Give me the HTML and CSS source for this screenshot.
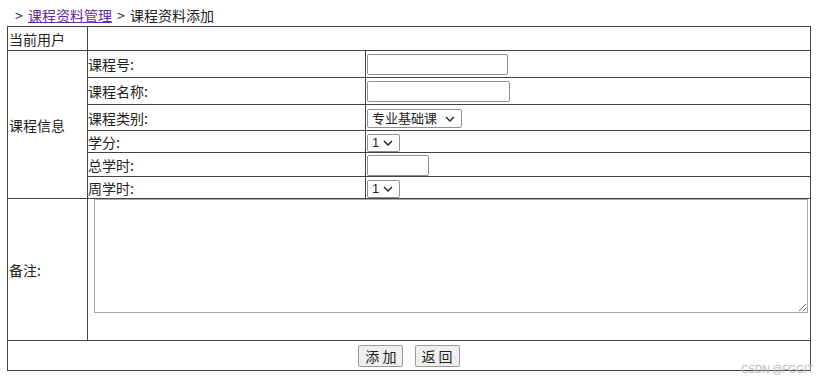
FILE: index.html
```html
<!DOCTYPE html>
<html lang="zh-CN">
<head>
    <meta charset="UTF-8">
    <title>课程资料添加</title>
    <link rel="stylesheet" href="styles.css">
</head>
<body>
    <div class="crumb">&gt; <a href="#">课程资料管理</a> &gt; 课程资料添加</div>

    <table class="form-table">
        <tr class="row-user">
            <td class="label-col">当前用户</td>
            <td colspan="2"></td>
        </tr>
        <tr class="row-text">
            <td class="label-col" rowspan="6">课程信息</td>
            <td class="name-col">课程号:</td>
            <td><input type="text" class="inp-id"></td>
        </tr>
        <tr class="row-text">
            <td class="name-col">课程名称:</td>
            <td><input type="text" class="inp-name"></td>
        </tr>
        <tr class="row-sel">
            <td class="name-col">课程类别:</td>
            <td>
                <select class="sel-type">
                    <option>专业基础课</option>
                    <option>专业必修课</option>
                    <option>公共课</option>
                </select>
            </td>
        </tr>
        <tr class="row-small">
            <td class="name-col">学分:</td>
            <td>
                <select class="sel-num">
                    <option>1</option><option>2</option><option>3</option><option>4</option>
                </select>
            </td>
        </tr>
        <tr class="row-hours">
            <td class="name-col">总学时:</td>
            <td><input type="text" class="inp-hours"></td>
        </tr>
        <tr class="row-small">
            <td class="name-col">周学时:</td>
            <td>
                <select class="sel-num">
                    <option>1</option><option>2</option><option>3</option><option>4</option>
                </select>
            </td>
        </tr>
        <tr class="row-note">
            <td class="label-col">备注:</td>
            <td colspan="2" class="note-cell"><textarea class="note"></textarea></td>
        </tr>
        <tr class="row-btn">
            <td colspan="3" class="btn-cell">
                <button class="btn">添 加</button>
                <button class="btn">返 回</button>
            </td>
        </tr>
    </table>

    <div class="mark">CSDN @FGGIT</div>
</body>
</html>
```

FILE: styles.css
```css
body {
    margin: 0;
    padding: 0 0 0 7px;
    font-family: "Noto Sans CJK SC", "Liberation Sans", sans-serif;
    font-size: 14px;
    color: #222;
    background: #fff;
    position: relative;
    height: 385px;
    overflow: hidden;
}

.crumb {
    height: 26px;
    line-height: 30px;
    padding-left: 8px;
    font-size: 14px;
    word-spacing: 2px;
}

.crumb a {
    color: #6a2aa8;
    text-decoration: underline;
    word-spacing: 0;
}

.form-table {
    width: 804px;
    border-collapse: collapse;
    border: 1px solid #444;
}

.form-table td {
    border: 1px solid #444;
    padding: 0;
    vertical-align: middle;
}

.label-col {
    width: 78px;
    padding-left: 1px !important;
}

.name-col {
    width: 277px;
}

.row-user { height: 24px; }
.row-text { height: 27px; }
.row-sel { height: 26px; }
.row-small { height: 22px; }
.row-hours { height: 23px; }
.row-note { height: 142px; }
.row-btn { height: 30px; }

input[type="text"] {
    box-sizing: border-box;
    height: 21px;
    margin: 0 0 0 1px;
    border: 1px solid #8f8f8f;
    border-radius: 2px;
    padding: 1px 2px;
    font: inherit;
    vertical-align: middle;
}

.inp-id { width: 141px; }
.inp-name { width: 143px; }
.inp-hours { width: 62px; }

select {
    -webkit-appearance: none;
    appearance: none;
    box-sizing: border-box;
    margin: 0 0 0 1px;
    height: 19px;
    border: 1px solid #8f8f8f;
    border-radius: 2px;
    background-color: #fff;
    background-image: url("data:image/svg+xml,%3Csvg xmlns='http://www.w3.org/2000/svg' width='10' height='6' viewBox='0 0 10 6'%3E%3Cpath d='M1 1l4 4 4-4' fill='none' stroke='%23222' stroke-width='1.4'/%3E%3C/svg%3E");
    background-repeat: no-repeat;
    background-position: right 6px center;
    font-family: "Liberation Sans", "Noto Sans CJK SC", sans-serif;
    font-size: 13px;
    line-height: 17px;
    color: #222;
    padding: 0 0 0 4px;
    vertical-align: middle;
}

.sel-type { width: 95px; }
.sel-num { width: 33px; height: 18px; line-height: 16px; }

.note-cell {
    vertical-align: top !important;
}

.note {
    box-sizing: border-box;
    display: block;
    width: 714px;
    height: 114px;
    margin: 0 0 0 6px;
    border: 1px solid #a9a9a9;
    border-radius: 0;
    resize: both;
}

.btn-cell {
    text-align: center;
}

.btn {
    box-sizing: border-box;
    height: 22px;
    width: 45px;
    margin: 0 4px;
    padding: 0;
    border: 1px solid #9a9a9a;
    border-radius: 2px;
    background: #efefef;
    font-family: "Noto Sans CJK SC", "Liberation Sans", sans-serif;
    font-size: 14px;
    line-height: 20px;
    color: #222;
}

.mark {
    position: absolute;
    right: 17px;
    top: 364px;
    font-family: "Liberation Sans", sans-serif;
    font-size: 10px;
    color: #b5b5b5;
}
```
